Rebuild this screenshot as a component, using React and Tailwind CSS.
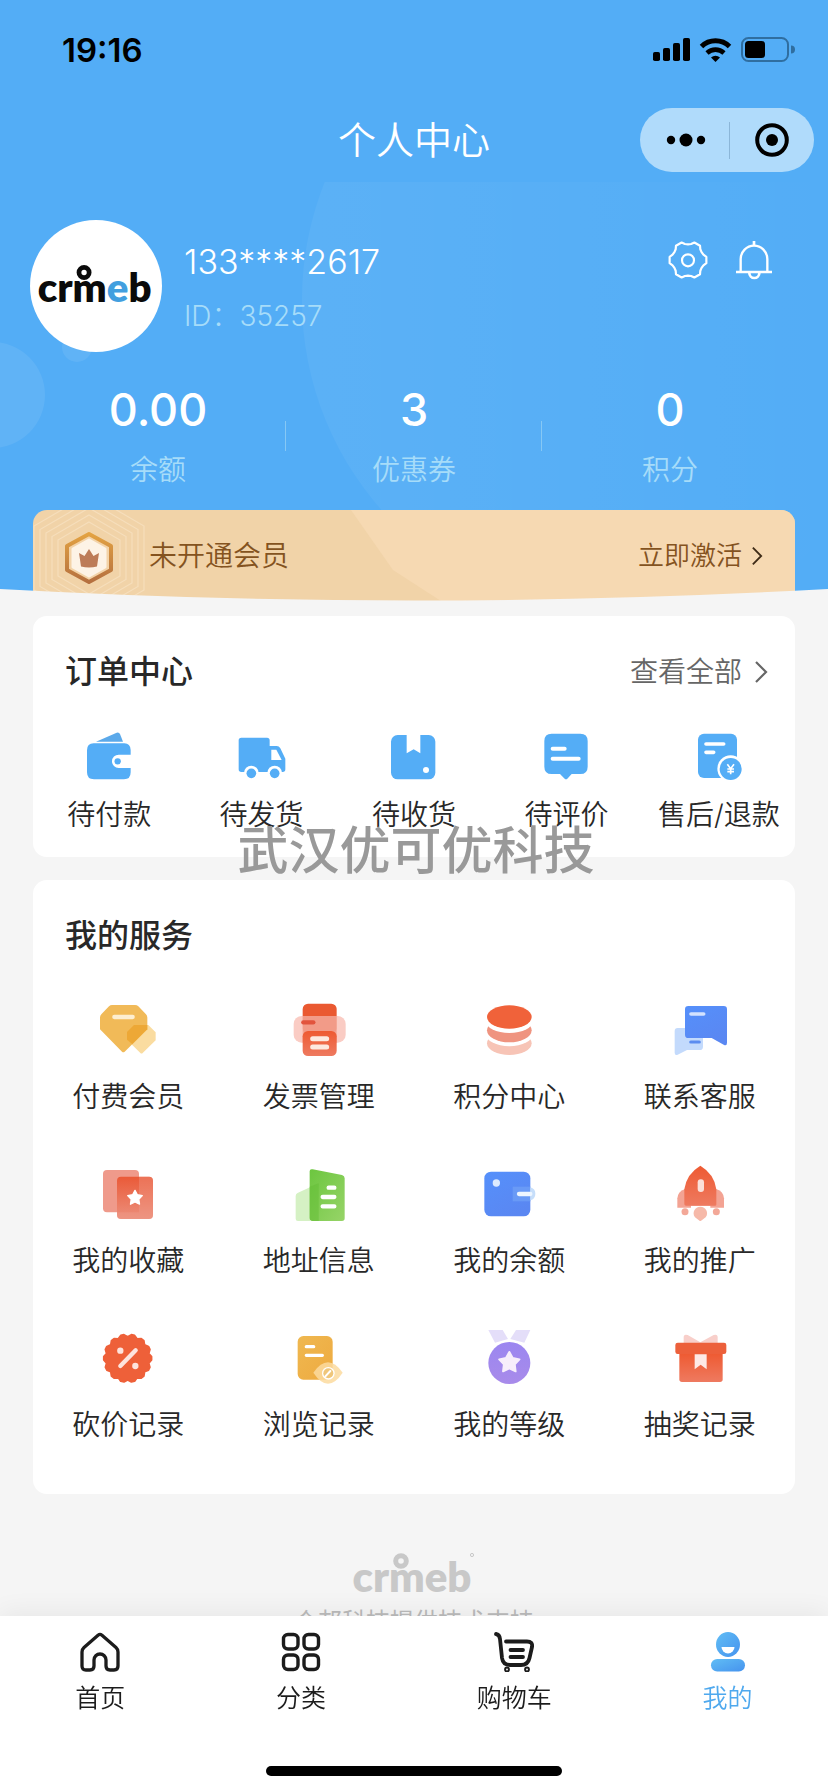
import React from "react";

const polar = (cx, cy, r, deg) => {
  const a = (deg * Math.PI) / 180;
  return `${(cx + r * Math.cos(a)).toFixed(1)},${(cy + r * Math.sin(a)).toFixed(1)}`;
};

const gearPoints = (cx, cy) =>
  [0, 60, 120, 180, 240, 300]
    .flatMap((t) => [
      polar(cx, cy, 56, t - 10),
      polar(cx, cy, 56, t + 10),
      polar(cx, cy, 49, t + 19),
      polar(cx, cy, 47, t + 30),
      polar(cx, cy, 49, t + 41),
    ])
    .join(" ");

const scallopPoints = (cx, cy, n) =>
  Array.from({ length: n }, (_, i) => (i * 360) / n + 90 + 180 / n)
    .flatMap((t) => [polar(cx, cy, 72, t - 4), polar(cx, cy, 72, t + 4), polar(cx, cy, 65, t + 180 / n)])
    .join(" ");

const starPoints = (cx, cy, outer, inner) =>
  [0, 1, 2, 3, 4]
    .flatMap((i) => [polar(cx, cy, outer, i * 72 - 90), polar(cx, cy, inner, i * 72 - 54)])
    .join(" ");

const hexPoints = (cx, cy, rx, ry) =>
  `${cx},${cy - ry} ${cx + rx},${cy - ry / 2} ${cx + rx},${cy + ry / 2} ${cx},${cy + ry} ${cx - rx},${cy + ry / 2} ${cx - rx},${cy - ry / 2}`;

function Gradients() {
  return (
    <svg className="absolute h-0 w-0" aria-hidden="true">
      <defs>
        <linearGradient id="red" x1="0" y1="0" x2="0" y2="1">
          <stop offset="0" stopColor="#ee5a32" />
          <stop offset="1" stopColor="#ee7a60" />
        </linearGradient>
        <linearGradient id="redFade" x1="0" y1="0" x2="0" y2="1">
          <stop offset="0" stopColor="#ea5a38" />
          <stop offset="1" stopColor="#ec8f7c" />
        </linearGradient>
        <linearGradient id="amber" x1="0" y1="0" x2="1" y2="1">
          <stop offset="0" stopColor="#efb850" />
          <stop offset="1" stopColor="#eeaa40" />
        </linearGradient>
        <linearGradient id="blue" x1="0" y1="0" x2="0.6" y2="1">
          <stop offset="0" stopColor="#5590fb" />
          <stop offset="1" stopColor="#5a87f2" />
        </linearGradient>
        <linearGradient id="green" x1="0" y1="0" x2="1" y2="1">
          <stop offset="0" stopColor="#6cc63f" />
          <stop offset="1" stopColor="#97d468" />
        </linearGradient>
        <linearGradient id="purple" x1="0" y1="0" x2="0" y2="1">
          <stop offset="0" stopColor="#9b86f0" />
          <stop offset="1" stopColor="#a88bea" />
        </linearGradient>
        <linearGradient id="sky" x1="0" y1="0" x2="1" y2="1">
          <stop offset="0" stopColor="#60bdf5" />
          <stop offset="1" stopColor="#4693ee" />
        </linearGradient>
        <linearGradient id="gold" x1="0" y1="0" x2="0" y2="1">
          <stop offset="0" stopColor="#e3a242" />
          <stop offset="1" stopColor="#b5703f" />
        </linearGradient>
        <linearGradient id="glow" x1="0" y1="0" x2="1" y2="0">
          <stop offset="0" stopColor="#fff" stopOpacity="0.05" />
          <stop offset="0.85" stopColor="#fff" stopOpacity="0" />
        </linearGradient>
      </defs>
    </svg>
  );
}

function Logo({ className, accent, mark }) {
  return (
    <svg viewBox="0 0 120 46" className={className} overflow="visible" role="img" aria-label="crmeb">
      <text x="58" y="42" textAnchor="middle" fill="currentColor" className="font-['Lato'] text-[42px] font-extrabold">
        cr
        <tspan>m</tspan>
        <tspan fill={accent}>e</tspan>b
      </text>
      <circle cx="47" cy="11" r="5.300" fill="none" stroke="currentColor" strokeWidth="5" />
      {mark && <circle cx="118" cy="5" r="1.600" fill="none" stroke="currentColor" />}
    </svg>
  );
}

const Chevron = ({ className }) => (
  <svg viewBox="0 0 14 24" className={className} fill="none" stroke="currentColor" strokeWidth="2.200" aria-hidden="true">
    <path d="M2 2 L12 12 L2 22" />
  </svg>
);

function StatusBar() {
  return (
    <div className="flex h-[99px] items-center justify-between pr-[33px] pl-[62px] text-black">
      <span className="text-[33px] leading-10 font-semibold">19:16</span>
      <svg viewBox="653 36 142 28" className="h-7 w-[142px]" aria-hidden="true">
        <rect x="653" y="52" width="7" height="9" rx="1.800" />
        <rect x="663" y="48" width="7" height="13" rx="1.800" />
        <rect x="673" y="43" width="7" height="18" rx="1.800" />
        <rect x="683" y="38" width="7" height="23" rx="1.800" />
        <path d="M701.5 46.5 a20 20 0 0 1 28 0" fill="none" stroke="#000" strokeWidth="5" />
        <path d="M707 53 a12.5 12.5 0 0 1 17 0" fill="none" stroke="#000" strokeWidth="4.600" />
        <path d="M711 57.5 a7 7 0 0 1 9 0 L715.5 62Z" />
        <rect x="742" y="38" width="46" height="23" rx="6.500" fill="none" stroke="#2f6ea0" strokeWidth="2" />
        <rect x="745" y="41" width="20" height="17" rx="3.500" />
        <path d="M791 45.500 a4 4 0 0 1 0 8Z" fill="#2f6ea0" />
      </svg>
    </div>
  );
}

function NavBar() {
  return (
    <div className="grid h-[82px] grid-cols-[1fr_auto_1fr] items-center">
      <span />
      <h1 className="text-[38px] leading-[48px] font-[350]">个人中心</h1>
      <div className="mr-[14px] flex h-16 w-[174px] items-center justify-self-end rounded-full bg-[#b0dbfb]">
        <button type="button" aria-label="更多" className="flex flex-1 items-center justify-center pl-1">
          <svg viewBox="0 0 40 14" className="h-[14px] w-10">
            <circle cx="5" cy="7" r="4.200" />
            <circle cx="20" cy="7" r="6.500" />
            <circle cx="35" cy="7" r="4.200" />
          </svg>
        </button>
        <span className="h-[37px] w-px bg-[#8bb6d8]" />
        <button type="button" aria-label="关闭" className="flex flex-1 items-center justify-center">
          <svg viewBox="0 0 34 34" className="h-[34px] w-[34px]">
            <circle cx="17" cy="17" r="14.800" fill="none" stroke="#000" strokeWidth="4" />
            <circle cx="17" cy="17" r="6" />
          </svg>
        </button>
      </div>
    </div>
  );
}

function Profile() {
  return (
    <div className="flex items-start pt-[39px] pr-[54px] pl-[30px]">
      <div className="flex h-[132px] w-[132px] shrink-0 items-center justify-center rounded-full bg-white text-[#0a0a0a]">
        <Logo className="mb-[5px] h-[44px] w-[115px]" accent="#429fdf" />
      </div>
      <div className="ml-[22px] flex-1 pt-5">
        <p className="text-[34px] leading-[44px] font-[350]">133****2617</p>
        <p className="mt-3 text-[28px] leading-10 font-light text-[#a6dcf9]">ID：35257</p>
      </div>
      <div className="flex gap-[26px] pt-5">
        <button type="button" aria-label="设置">
          <svg viewBox="762 123 120 120" className="h-10 w-10" fill="none" stroke="#fff" strokeWidth="6.500" strokeLinejoin="round">
            <polygon points={gearPoints(822, 183)} />
            <circle cx="822" cy="184" r="18" />
          </svg>
        </button>
        <button type="button" aria-label="消息">
          <svg viewBox="960 123 120 120" className="h-10 w-10" fill="none" stroke="#fff" strokeWidth="7">
            <path d="M980 218 V180 a40 40 0 0 1 80 0 V218" />
            <path d="M966 219 H1074" />
            <path d="M1020 126 V140" strokeWidth="8" />
            <path d="M1006 222 a15 15 0 0 0 30 0" strokeWidth="8" />
          </svg>
        </button>
      </div>
    </div>
  );
}

const stats = [
  ["0.00", "余额"],
  ["3", "优惠券"],
  ["0", "积分"],
];

function Stats() {
  return (
    <div className="mt-[30px] flex items-center px-[30px]">
      {stats.map(([value, label], i) => (
        <React.Fragment key={label}>
          {i > 0 && <span className="-ml-px h-[30px] w-px bg-[#86c8f5]" />}
          <a href="#" className="flex flex-1 flex-col items-center gap-3">
            <span className="text-[45px] leading-[56px] font-medium">{value}</span>
            <span className="text-[28px] leading-10 font-[350] text-[#a6dcf9]">{label}</span>
          </a>
        </React.Fragment>
      ))}
    </div>
  );
}

function VipBanner() {
  return (
    <a href="#" className="relative mx-[33px] mt-5 flex h-[91px] items-center overflow-hidden rounded-t-[14px] bg-[#f1d3a8] pr-[32px] text-[#84531f]">
      <svg viewBox="0 0 762 91" preserveAspectRatio="none" className="absolute inset-0 h-full w-full" aria-hidden="true">
        <polygon points="318,0 762,0 762,91 408,91 360,60" fill="#f6d9b2" />
      </svg>
      <svg viewBox="0 0 116 91" className="relative h-[91px] w-[116px] shrink-0" aria-hidden="true">
        <g fill="none" stroke="#f8e3c4" strokeWidth="1.200" opacity="0.7">
          <polygon points={hexPoints(56, 48, 31, 36)} />
          <polygon points={hexPoints(56, 48, 37, 43)} />
          <polygon points={hexPoints(56, 48, 43, 50)} />
          <polygon points={hexPoints(56, 48, 49, 57)} />
          <polygon points={hexPoints(56, 48, 55, 64)} />
        </g>
        <polygon points={hexPoints(56, 48, 22, 24)} fill="#f3d3a8" stroke="url(#gold)" strokeWidth="4" strokeLinejoin="round" />
        <polygon points={hexPoints(56, 48, 16, 18)} fill="#fdf3e6" stroke="#fdf3e6" strokeWidth="3" strokeLinejoin="round" />
        <path d="M46 43 L51.500 46 L56 39 L60.500 46 L66 43 L64 56.500 Q56 58.500 48 56.500Z" fill="#bd7c58" />
      </svg>
      <span className="relative flex-1 text-[28px] leading-10 font-[350]">未开通会员</span>
      <span className="relative text-[26px] leading-10 font-[350]">立即激活</span>
      <Chevron className="relative ml-[9px] h-5 w-3 text-[#3f2c17]" />
    </a>
  );
}

function Header() {
  return (
    <header className="relative overflow-hidden bg-[#53adf6] text-white">
      <svg viewBox="0 182 828 419" preserveAspectRatio="xMaxYMin meet" className="absolute top-[182px] h-[419px] w-full" aria-hidden="true">
        <circle cx="619" cy="300" r="317" fill="url(#glow)" />
        <circle cx="-8" cy="395" r="53" fill="#fff" fillOpacity="0.08" />
        <circle cx="77" cy="347" r="15" fill="#fff" fillOpacity="0.08" />
      </svg>
      <div className="relative">
        <StatusBar />
        <NavBar />
        <Profile />
        <Stats />
        <VipBanner />
      </div>
      <svg viewBox="0 0 828 12" preserveAspectRatio="none" className="absolute bottom-0 h-3 w-full" aria-hidden="true">
        <path d="M0 0 Q414 23 828 0 V12 H0Z" fill="#f5f5f5" />
      </svg>
    </header>
  );
}

const B = "#54adf6";
const orders = [
  {
    label: "待付款",
    box: "163 96 144 144",
    art: (
      <>
        <path d="M196 125 L258 98 Q265 96 268 102 L277 125Z" fill="#5ba9ea" />
        <path d="M189 130 H281 Q299 130 300 150 V164 H264 A20 20 0 0 0 264 204 H300 V217 Q300 238 280 238 H190 Q169 238 169 217 V151 Q169 130 189 130Z" fill={B} />
        <circle cx="261" cy="184" r="9.500" fill={B} />
      </>
    ),
  },
  {
    label: "待发货",
    box: "621 96 144 144",
    art: (
      <>
        <path d="M631 113 H708 Q716 113 716 121 V138 H737 Q744 138 748 145 L763 176 V208 Q763 216 755 216 H631 Q623 216 623 208 V121 Q623 113 631 113Z" fill={B} />
        <path d="M721 149 H736 L752 180 H721Z" fill="#fff" />
        <circle cx="661" cy="219" r="22" fill="#fff" />
        <circle cx="731" cy="219" r="22" fill="#fff" />
        <circle cx="661" cy="220" r="14.500" fill={B} />
        <circle cx="731" cy="220" r="14.500" fill={B} />
      </>
    ),
  },
  {
    label: "待收货",
    box: "1080 96 144 144",
    art: (
      <>
        <rect x="1083" y="105" width="133" height="133" rx="20" fill={B} />
        <path d="M1130 103 H1171 V160 L1151 148 L1130 160Z" fill="#fff" />
        <circle cx="1188" cy="210" r="9" fill="#fff" />
      </>
    ),
  },
  {
    label: "待评价",
    box: "337 96 144 144",
    art: (
      <>
        <path d="M366 101 H452 Q474 101 474 123 V200 Q474 222 452 222 H426 L413 236 Q409 239 405 236 L391 222 H366 Q344 222 344 200 V123 Q344 101 366 101Z" fill={B} />
        <path d="M369 146 H405 M369 176 H447" stroke="#fff" strokeWidth="12" strokeLinecap="round" />
      </>
    ),
  },
  {
    label: "售后/退款",
    box: "795 96 144 144",
    art: (
      <>
        <rect x="804" y="101" width="117" height="133" rx="18" fill={B} />
        <path d="M828 132 H881 M828 157 H851" stroke="#fff" strokeWidth="11" strokeLinecap="round" />
        <circle cx="902" cy="206" r="40" fill="#fff" />
        <circle cx="902" cy="207" r="33" fill={B} />
        <path d="M892 193 L902 206 L912 193 M902 206 V223 M892 207 H912 M892 215 H912" stroke="#fff" strokeWidth="5" fill="none" />
      </>
    ),
  },
];

const services = [
  {
    label: "付费会员",
    box: "210 303 168 168",
    art: (
      <>
        <path d="M246 315 H315 Q321 315 325 319 L348 343 Q352 347 352 353 V388 L284 455 Q280 459 276 455 L210 388 V353 Q210 347 214 343 L237 319 Q241 315 246 315Z" fill="#f1ba58" />
        <path d="M312 375 H355 L377 397 V421 L338 459 Q335 462 331 459 L291 419 V396Z" fill="#f6c052" fillOpacity="0.55" />
        <path d="M312 375 H352 V388 L307 433 L291 419 V396Z" fill="#eba22c" fillOpacity="0.75" />
        <path d="M253 351 H308" stroke="#fdeed0" strokeWidth="13" strokeLinecap="round" />
      </>
    ),
  },
  {
    label: "发票管理",
    box: "781 303 168 168",
    art: (
      <>
        <rect x="816" y="311" width="102" height="90" rx="16" fill="#ea5931" />
        <rect x="789" y="348" width="156" height="80" rx="24" fill="#f9c3ba" fillOpacity="0.85" />
        <path d="M816 348 H918 V428 H816Z" fill="#ef8b75" fillOpacity="0.6" />
        <path d="M818 367 H848" stroke="#e2543d" strokeWidth="13" strokeLinecap="round" />
        <rect x="816" y="393" width="102" height="75" rx="16" fill="url(#red)" />
        <path d="M846 416 H888 M846 441 H888" stroke="#fde9e0" strokeWidth="15" strokeLinecap="round" />
      </>
    ),
  },
  {
    label: "积分中心",
    box: "155 303 168 168",
    art: (
      <>
        <ellipse cx="240" cy="430" rx="67" ry="35" fill="#f7c4b6" />
        <ellipse cx="240" cy="401" rx="71" ry="38" fill="#fff" />
        <ellipse cx="240" cy="391" rx="67" ry="36" fill="#ef9480" />
        <ellipse cx="240" cy="362" rx="71" ry="37" fill="#fff" />
        <ellipse cx="240" cy="351" rx="67" ry="35" fill="#f0623a" />
      </>
    ),
  },
  {
    label: "联系客服",
    box: "727 303 168 168",
    art: (
      <>
        <path d="M744 384 H810 Q820 384 820 394 V440 Q820 450 810 450 H772 L744 464 Q735 467 735 458 V394 Q735 384 744 384Z" fill="#c3dafc" />
        <path d="M776 318 H882 Q892 318 892 328 V428 Q892 439 882 434 L846 414 H776 Q766 414 766 404 V328 Q766 318 776 318Z" fill="url(#blue)" />
        <path d="M784 342 H822" stroke="#d3e2fe" strokeWidth="11" strokeLinecap="round" />
        <path d="M783 426 H809" stroke="#5b8cf0" strokeWidth="9" strokeLinecap="round" />
      </>
    ),
  },
  {
    label: "我的收藏",
    box: "210 105 168 168",
    art: (
      <>
        <rect x="219" y="120" width="108" height="127" rx="12" fill="#ef9a8b" />
        <rect x="261" y="140" width="108" height="127" rx="12" fill="url(#redFade)" />
        <path d="M327 140 H357 Q369 140 369 152 V255 Q369 267 357 267 H273 Q261 267 261 255 V247 H327Z" fill="#f0a090" fillOpacity="0.35" />
        <polygon points={starPoints(315, 204, 23, 12)} fill="#fff" stroke="#fff" strokeWidth="4" strokeLinejoin="round" />
      </>
    ),
  },
  {
    label: "地址信息",
    box: "781 105 168 168",
    art: (
      <>
        <path d="M802 188 L838 172 V273 H802 Q795 273 795 266 V198 Q795 191 802 188Z" fill="#d5f1c4" />
        <path d="M846 118 L934 135 Q942 137 942 145 V265 Q942 273 934 273 H846 Q837 273 837 264 V124 Q837 116 846 118Z" fill="url(#green)" />
        <path d="M837 170 L864 160 V273 H846 Q837 273 837 264Z" fill="#63be35" fillOpacity="0.5" />
        <path d="M894 173 H911 M876 201 H911 M876 229 H911" stroke="#fff" strokeWidth="13" strokeLinecap="round" />
      </>
    ),
  },
  {
    label: "我的余额",
    box: "155 105 168 168",
    art: (
      <>
        <rect x="165" y="125" width="138" height="134" rx="20" fill="url(#blue)" />
        <circle cx="201" cy="159" r="11" fill="#dceafe" />
        <rect x="250" y="170" width="53" height="44" fill="#699af6" />
        <path d="M303 172 Q318 176 318 191 Q318 207 303 211Z" fill="#c6defa" />
        <path d="M269 192 H303" stroke="#eef6ff" strokeWidth="13" strokeLinecap="round" />
      </>
    ),
  },
  {
    label: "我的推广",
    box: "727 105 168 168",
    art: (
      <>
        <path d="M743 233 V205 Q745 184 765 178 H861 Q881 184 883 205 V233Z" fill="#f3a393" />
        <path d="M784 227 H842 V236 H784Z" fill="#fff" />
        <path d="M812 107 Q854 132 860 178 V224 Q860 227 856 227 H769 Q764 227 764 222 V178 Q770 132 812 107Z" fill="url(#red)" />
        <rect x="804" y="148" width="19" height="38" rx="9" fill="#fbe0d9" />
        <circle cx="766" cy="245" r="10.500" fill="#f3a898" />
        <circle cx="860" cy="245" r="10.500" fill="#f3a898" />
        <path d="M812 230 A20 20 0 0 1 828 262 L812 274 L796 262 A20 20 0 0 1 812 230Z" fill="#f6b9a9" />
      </>
    ),
  },
  {
    label: "砍价记录",
    box: "210 597 168 168",
    art: (
      <>
        <polygon points={scallopPoints(293, 685, 14)} fill="#ee6039" stroke="#ee6039" strokeWidth="5" strokeLinejoin="round" />
        <path d="M271 708 L317 661" stroke="#fde3dd" strokeWidth="13" strokeLinecap="round" />
        <circle cx="271" cy="662" r="9.500" fill="#fde3dd" />
        <circle cx="316" cy="708" r="9.500" fill="#fde3dd" />
      </>
    ),
  },
  {
    label: "浏览记录",
    box: "781 597 168 168",
    art: (
      <>
        <rect x="801" y="618" width="105" height="131" rx="17" fill="url(#amber)" />
        <path d="M827 650 H849 M827 676 H875" stroke="#fff" strokeWidth="10" strokeLinecap="round" />
        <path d="M848 728 Q892 666 936 728 Q892 794 848 728Z" fill="#fbdb9f" fillOpacity="0.85" />
        <circle cx="893" cy="730" r="19" fill="#fff" />
        <circle cx="893" cy="730" r="15" fill="#efc67a" />
        <path d="M884 739 L899 723" stroke="#fff" strokeWidth="6" strokeLinecap="round" />
      </>
    ),
  },
  {
    label: "我的等级",
    box: "155 600 168 168",
    art: (
      <>
        <path d="M177 603 H220 L236 630 L197 641Z" fill="#e4def9" />
        <path d="M303 603 H260 L243 630 L285 641Z" fill="#e4def9" />
        <circle cx="240" cy="702" r="67" fill="#fff" />
        <circle cx="240" cy="702" r="63" fill="url(#purple)" />
        <polygon points={starPoints(240, 701, 32, 17)} fill="#f7eefb" stroke="#f7eefb" strokeWidth="6" strokeLinejoin="round" />
      </>
    ),
  },
  {
    label: "抽奖记录",
    box: "727 597 168 168",
    art: (
      <>
        <path d="M762 640 V622 Q762 611 774 615 L812 637 L852 615 Q864 611 864 622 V640Z" fill="#f8cfca" />
        <path d="M749 670 H879 V748 Q879 756 871 756 H757 Q749 756 749 748Z" fill="url(#red)" />
        <rect x="737" y="638" width="153" height="34" rx="7" fill="#ec603b" />
        <path d="M795 673 H831 V718 L813 704 L795 718Z" fill="#fde9e6" />
      </>
    ),
  },
];

function OrderCard() {
  return (
    <section className="relative mx-[33px] mt-[15px] rounded-[14px] bg-white pb-[22px]">
      <div className="flex items-center justify-between pt-[34px] pr-[27px] pl-8">
        <h2 className="text-[32px] leading-[44px] font-medium">订单中心</h2>
        <a href="#" className="flex items-center gap-3 text-[28px] leading-10 font-[350] text-[#666]">
          查看全部
          <Chevron className="h-6 w-[14px]" />
        </a>
      </div>
      <ul className="mt-[38px] flex">
        {orders.map((o) => (
          <li key={o.label} className="flex-1">
            <a href="#" className="flex flex-col items-center gap-[15px]">
              <svg viewBox={o.box} className="h-12 w-12" aria-hidden="true">{o.art}</svg>
              <span className="text-[28px] leading-10 font-[350] whitespace-nowrap">{o.label}</span>
            </a>
          </li>
        ))}
      </ul>
      <p className="pointer-events-none absolute inset-x-0 -bottom-5 pl-1 text-center text-[51px] leading-[52px] font-medium text-[#999]">
        武汉优可优科技
      </p>
    </section>
  );
}

function ServiceCard() {
  return (
    <section className="mx-[33px] mt-[23px] rounded-[14px] bg-white pb-[49px]">
      <h2 className="px-8 pt-[34px] text-[32px] leading-[44px] font-medium">我的服务</h2>
      <ul className="mt-[43px] grid grid-cols-4 gap-y-12">
        {services.map((s) => (
          <li key={s.label}>
            <a href="#" className="flex flex-col items-center gap-5">
              <svg viewBox={s.box} className="h-14 w-14" aria-hidden="true">{s.art}</svg>
              <span className="text-[28px] leading-10 font-[350] whitespace-nowrap">{s.label}</span>
            </a>
          </li>
        ))}
      </ul>
    </section>
  );
}

const tabs = [
  {
    label: "首页",
    art: (
      <path d="M4 15.500 L18 3.200 Q20 1.600 22 3.200 L36 15.500 Q38 17.300 38 20 V34 Q38 38 34 38 H30 Q26 38 26 34 V28 A6 6 0 0 0 14 28 V34 Q14 38 10 38 H6 Q2 38 2 34 V20 Q2 17.300 4 15.500Z" fill="none" stroke="currentColor" strokeWidth="3.300" />
    ),
  },
  {
    label: "分类",
    art: (
      <g fill="none" stroke="currentColor" strokeWidth="3.400">
        <rect x="2.500" y="2.500" width="14.500" height="14.500" rx="4.500" />
        <rect x="23" y="2.500" width="14.500" height="14.500" rx="4.500" />
        <rect x="2.500" y="23" width="14.500" height="14.500" rx="4.500" />
        <rect x="23" y="23" width="14.500" height="14.500" rx="4.500" />
      </g>
    ),
  },
  {
    label: "购物车",
    art: (
      <g fill="none" stroke="currentColor" strokeWidth="3.800" strokeLinecap="round">
        <path d="M2 2 Q5.500 2.500 6 7 L8 26 Q9 33 16 33 H27 Q34 33 35.500 26 L38 15 Q39 9.500 33 9.500 H12" />
        <path d="M16.500 18 H29 M16.500 25 H29" />
        <circle cx="13" cy="37.500" r="1" />
        <circle cx="33" cy="37.500" r="1" />
      </g>
    ),
  },
  {
    label: "我的",
    active: true,
    art: (
      <g>
        <ellipse cx="20" cy="12.500" rx="12" ry="12.500" fill="url(#sky)" />
        <rect x="3" y="27" width="34" height="12.500" rx="6.200" fill="url(#sky)" />
        <path d="M13.500 15 H26.500 A6.500 6.500 0 0 1 13.500 15Z" fill="#fff" />
      </g>
    ),
  },
];

function TabBar() {
  return (
    <nav className="fixed inset-x-0 bottom-0 bg-white shadow-[0_-4px_24px_rgba(0,0,0,0.06)]">
      <ul className="flex justify-around pt-4">
        {tabs.map((t) => (
          <li key={t.label}>
            <a href="#" className={`flex flex-col items-center gap-2 ${t.active ? "text-[#4fa9ee]" : "text-[#1c1c1c]"}`}>
              <svg viewBox="0 0 40 40" className="h-10 w-10" aria-hidden="true">{t.art}</svg>
              <span className="text-[25px] leading-9 font-[350]">{t.label}</span>
            </a>
          </li>
        ))}
      </ul>
      <div className="mx-auto mt-[50px] mb-4 h-[10px] w-[296px] rounded-full bg-black" />
    </nav>
  );
}

export default function App() {
  return (
    <div className="relative min-h-screen bg-[#f5f5f5] font-['Inter','Noto_Sans_CJK_SC',sans-serif] text-[#282828]">
      <Gradients />
      <Header />
      <main>
        <OrderCard />
        <ServiceCard />
      </main>
      <footer className="flex flex-col items-center pt-[56px] pb-[144px] text-[#c8c8c8]">
        <Logo className="h-[46px] w-[120px]" accent="#c8c8c8" mark />
        <p className="mt-[10px] text-2xl leading-8 text-[#bbb]">众邦科技提供技术支持</p>
      </footer>
      <TabBar />
    </div>
  );
}
